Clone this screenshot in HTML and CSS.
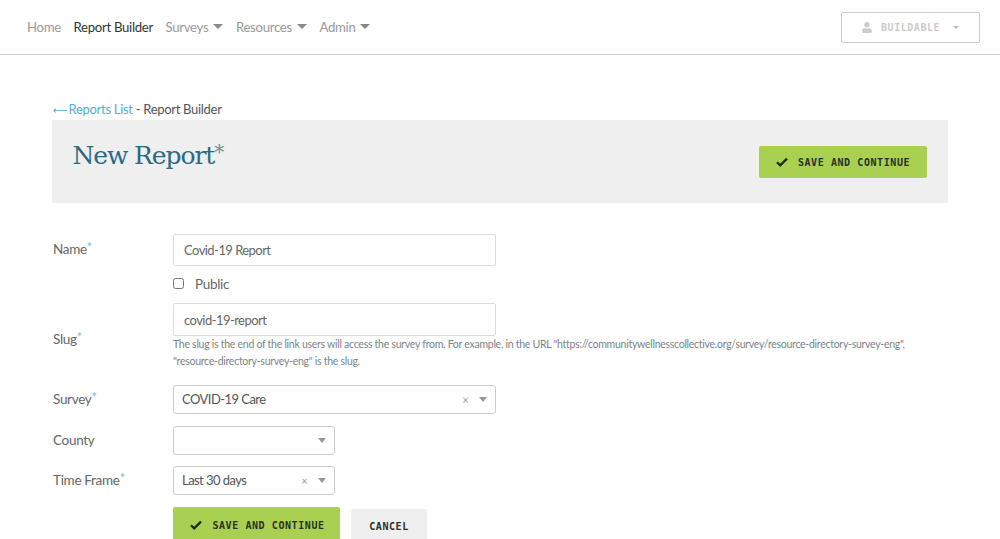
FILE: index.html
```html
<!DOCTYPE html>
<html lang="en">
<head>
<meta charset="utf-8">
<title>Report Builder</title>
<link rel="stylesheet" href="styles.css">
</head>
<body>
<header class="topbar">
  <nav class="nav">
    <a class="nav-link">Home</a>
    <a class="nav-link active">Report Builder</a>
    <a class="nav-link">Surveys<span class="caret"></span></a>
    <a class="nav-link">Resources<span class="caret"></span></a>
    <a class="nav-link">Admin<span class="caret"></span></a>
  </nav>
  <button class="user-btn">
    <svg class="user-icon" viewBox="0 0 448 512"><path fill="#ccc" d="M224 256a128 128 0 1 0 0-256 128 128 0 0 0 0 256zm90 32h-17a174 174 0 0 1-146 0h-17A134 134 0 0 0 0 422v42a48 48 0 0 0 48 48h352a48 48 0 0 0 48-48v-42a134 134 0 0 0-134-134z"/></svg>
    <span>BUILDABLE</span>
    <span class="user-caret"></span>
  </button>
</header>
<main class="page">
  <div class="crumbs"><a class="crumb-link"><span class="arrow">⟵</span>Reports List</a> - Report Builder</div>
  <section class="banner">
    <h1 class="title">New Report<span class="title-star">*</span></h1>
    <button class="btn btn-save banner-btn"><svg class="check" viewBox="0 0 12 10"><path d="M1 5.2 4.2 8.4 11 1.6" fill="none" stroke="#1f2a12" stroke-width="2.2"/></svg>SAVE AND CONTINUE</button>
  </section>
  <form class="form">
    <div class="row row-name">
      <label class="label">Name<span class="req">*</span></label>
      <div class="field"><div class="input">Covid-19 Report</div></div>
    </div>
    <div class="row row-public">
      <span></span>
      <label class="public"><input class="checkbox" type="checkbox">Public</label>
    </div>
    <div class="row row-slug">
      <label class="label">Slug<span class="req">*</span></label>
      <div class="field-wide">
        <div class="input input-slug">covid-19-report</div>
        <p class="help">The slug is the end of the link users will access the survey from. For example, in the URL "https://communitywellnesscollective.org/survey/resource-directory-survey-eng", "resource-directory-survey-eng" is the slug.</p>
      </div>
    </div>
    <div class="row row-survey">
      <label class="label">Survey<span class="req">*</span></label>
      <div class="select select-wide"><span class="select-value">COVID-19 Care</span><span class="clear">×</span><span class="select-caret"></span></div>
    </div>
    <div class="row row-county">
      <label class="label">County</label>
      <div class="select select-small"><span class="select-value"></span><span class="select-caret"></span></div>
    </div>
    <div class="row row-time">
      <label class="label">Time Frame<span class="req">*</span></label>
      <div class="select select-small"><span class="select-value">Last 30 days</span><span class="clear">×</span><span class="select-caret"></span></div>
    </div>
    <div class="row row-actions">
      <span></span>
      <div class="actions">
        <button class="btn btn-save btn-large" type="button"><svg class="check" viewBox="0 0 12 10"><path d="M1 5.2 4.2 8.4 11 1.6" fill="none" stroke="#1f2a12" stroke-width="2.2"/></svg>SAVE AND CONTINUE</button>
        <button class="btn btn-cancel" type="button">CANCEL</button>
      </div>
    </div>
  </form>
</main>
</body>
</html>
```

FILE: styles.css
```css
* { box-sizing: border-box; }
html, body { margin: 0; height: 539px; overflow: hidden; }
body { background: #fff; font-family: "Lato", "Open Sans", sans-serif; font-size: 13px; color: #555; }

.topbar { height: 55px; border-bottom: 1px solid #ccc; display: flex; align-items: flex-start; justify-content: space-between; padding: 12px 20px 0 27px; }
.nav { display: flex; gap: 12.5px; padding-top: 7px; }
.nav-link { color: #999; font-size: 13.2px; line-height: 16px; letter-spacing: -0.3px; }
.nav-link.active { color: #333; }
.caret { display: inline-block; margin-left: 5px; vertical-align: 3px; border-top: 5px solid #888; border-left: 5px solid transparent; border-right: 5px solid transparent; }

.user-btn { width: 139px; height: 31px; background: #fff; border: 1px solid #ccc; border-radius: 2px; display: flex; align-items: center; padding: 0 0 0 20px; font-family: "DejaVu Sans Mono", monospace; font-weight: 700; font-size: 10px; letter-spacing: 0.55px; color: #ccc; }
.user-icon { width: 10px; height: 11px; margin-right: 9px; }
.user-caret { margin-left: 13px; border-top: 3px solid #bbb; border-left: 3px solid transparent; border-right: 3px solid transparent; }

.page { padding: 46px 52px 0 53px; }
.crumbs { height: 19px; line-height: 16px; font-size: 13px; color: #555; letter-spacing: -0.3px; }
.crumb-link { color: #5aaec8; }
.arrow { font-family: "DejaVu Sans", sans-serif; font-size: 10.5px; letter-spacing: 0; margin-right: 0.5px; }

.banner { height: 83px; background: #efefef; display: flex; justify-content: space-between; align-items: flex-start; padding: 0 20.5px 0 20px; margin: 0 0.5px 0 -1px; }
.title { margin: 14px 0 0 0.5px; font-family: "DejaVu Serif", "Liberation Serif", serif; font-weight: 400; font-size: 25px; line-height: 36px; color: #2c6a82; letter-spacing: -1.1px; }
.title-star { color: #6e8f9d; font-size: 20px; vertical-align: 5px; }

.btn { display: inline-flex; align-items: center; justify-content: center; border: 0; border-radius: 2px; font-family: "DejaVu Sans Mono", monospace; font-weight: 700; font-size: 10px; letter-spacing: 0.58px; color: #2b2f28; padding: 0; }
.btn-save { background: #a9d051; }
.banner-btn { width: 168px; height: 32px; margin-top: 26px; }
.check { width: 12px; height: 10px; margin-right: 10px; }

.form { margin-top: 31px; }
.row { display: grid; grid-template-columns: 120px 1fr; align-items: center; }
.label { font-size: 13.5px; color: #666; letter-spacing: -0.3px; }
.req { color: #7fbdd4; font-size: 13px; line-height: 0; vertical-align: 2px; }
.row-name .label { margin-top: -2px; }
.field { width: 323px; }
.input { width: 323px; height: 32px; border: 1px solid #ddd; border-radius: 2px; padding-left: 10px; display: flex; align-items: center; font-size: 13px; letter-spacing: -0.55px; color: #666; }
.input-slug { height: 33px; }
.row-public { margin-top: 8px; height: 19px; }
.public { display: flex; align-items: center; font-size: 13.5px; letter-spacing: -0.3px; color: #666; }
.checkbox { width: 11px; height: 11px; margin: 0 11px 0 0; }
.row-slug { margin-top: 10px; }
.row-slug .label { margin-top: 5px; }
.help { margin: 0; font-size: 10.5px; line-height: 16.5px; letter-spacing: -0.27px; color: #7b848a; width: 745px; }
.row-survey { margin-top: 16px; }
.row-survey .label, .row-county .label, .row-time .label { margin-top: -2px; }
.select { height: 29px; border: 1px solid #ccc; border-radius: 3px; display: flex; align-items: center; padding: 0 7px 0 8px; color: #555; font-size: 13px; letter-spacing: -0.55px; }
.select-value { flex: 1; margin-top: -2px; }
.select-wide { width: 323px; }
.select-small { width: 162px; }
.clear { color: #999; font-size: 11px; margin-right: 11px; }
.select-caret { border-top: 5px solid #999; border-left: 4.5px solid transparent; border-right: 4.5px solid transparent; margin-right: 1px; }
.row-county { margin-top: 12px; }
.row-time { margin-top: 11px; }
.row-actions { margin-top: 12px; }
.actions { display: flex; align-items: flex-start; gap: 11px; }
.btn-large { width: 167px; height: 36px; padding-left: 2px; }
.btn-cancel { width: 76px; height: 34px; margin-top: 2px; background: #efefef; }
```
